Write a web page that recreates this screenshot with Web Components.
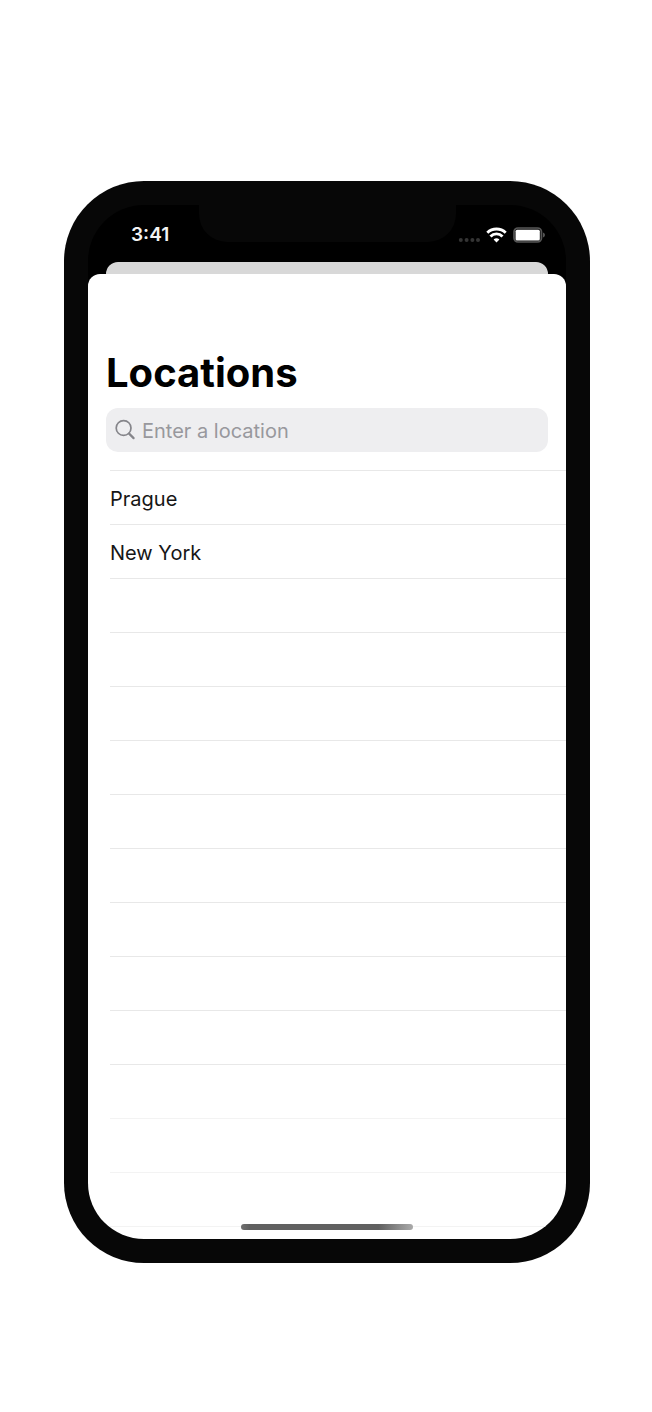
<!DOCTYPE html>
<html lang="en">
<head>
<meta charset="utf-8">
<meta name="viewport" content="width=device-width, initial-scale=1">
<title>Locations</title>
<style>
body { margin: 0; background: #fff; font-family: Inter, "Liberation Sans", sans-serif; color: #000; }
</style>
</head>
<body>
<phone-frame>
  <status-bar slot="status" time="3:41"></status-bar>
  <modal-sheet heading="Locations">
    <search-field placeholder="Enter a location"></search-field>
    <location-list rows="15">
      <location-row>Prague</location-row>
      <location-row>New York</location-row>
    </location-list>
  </modal-sheet>
</phone-frame>
<script>
const define = (name, html, setup) => customElements.define(name, class extends HTMLElement {
  connectedCallback() {
    if (this.shadowRoot) return;
    this.attachShadow({ mode: "open" }).innerHTML = html;
    if (setup) setup(this, this.shadowRoot);
  }
});

define("phone-frame", `
<style>
:host { display: block; padding: 181px 62px 149px 64px; }
.bezel { padding: 24px; border-radius: 80px; background: #070707; }
.screen { position: relative; overflow: hidden; border-radius: 56px; background: #000; }
.notch { position: absolute; top: 0; left: 111px; right: 110px; height: 37px; background: #070707; border-radius: 0 0 28px 28px; }
.home { position: absolute; bottom: 9px; left: 32%; right: 32%; height: 6px; border-radius: 3px;
  background: linear-gradient(90deg, #707070 0%, #606060 5%, #606060 80%, #aaa 100%); }
</style>
<div class="bezel"><div class="screen">
  <div class="notch"></div>
  <slot name="status"></slot>
  <slot></slot>
  <div class="home"></div>
</div></div>`);

define("status-bar", `
<style>
:host { display: block; position: relative; color: #f4f4f4; }
.bar { display: flex; align-items: center; justify-content: space-between; height: 57px; padding: 3px 21px 0 43px; box-sizing: border-box; }
time { font-size: 19px; line-height: 24px; font-weight: 600; }
.icons { display: flex; align-items: center; gap: 6px; }
svg { display: block; }
</style>
<div class="bar">
  <time></time>
  <div class="icons">
    <svg width="22" height="16" viewBox="0 0 22 16" fill="#343434"><circle cx="2.8" cy="13" r="2"/><circle cx="8.6" cy="13" r="2"/><circle cx="14.4" cy="13" r="2"/><circle cx="20" cy="13" r="2"/></svg>
    <svg width="21" height="16" viewBox="0 0 21 16" fill="none" stroke="#fff" stroke-width="2.9"><path d="M1.3 5.7A13.2 13.2 0 0 1 19.7 5.7"/><path d="M4.5 9.4A8.3 8.3 0 0 1 16.5 9.4"/><path d="M10.5 15.4 7.6 12.4Q10.5 10 13.4 12.4Z" fill="#fff" stroke="none"/></svg>
    <svg width="32" height="16" viewBox="0 0 32 16"><rect x="1" y="1" width="27.5" height="14" rx="4" fill="#111" stroke="#555" stroke-width="1.7"/><rect x="2.6" y="2.8" width="24.2" height="10.6" rx="1.5" fill="#fff"/><path d="M30 5.6Q32 6.2 32 8T30 10.4Z" fill="#555"/></svg>
  </div>
</div>`, (el, root) => { root.querySelector("time").textContent = el.getAttribute("time"); });

define("modal-sheet", `
<style>
:host { display: block; }
.behind { height: 12px; margin: 0 18px; border-radius: 12px 12px 0 0; background: #d8d8d8; }
.sheet { background: #fff; border-radius: 12px 12px 0 0; padding-top: 75px; }
h1 { margin: 0 18px 11px; font-size: 40px; line-height: 48px; font-weight: 700; }
</style>
<div class="behind"></div>
<div class="sheet"><h1></h1><slot></slot></div>`,
(el, root) => { root.querySelector("h1").textContent = el.getAttribute("heading"); });

define("search-field", `
<style>
:host { display: block; margin: 0 18px 18px; }
label { display: flex; align-items: center; gap: 5px; height: 44px; padding: 0 9px; border-radius: 12px; background: #eeeef0; }
svg { flex: none; }
input { flex: 1; min-width: 0; padding: 2px 0 0; border: 0; outline: 0; background: none; font: 20px/24px Inter, "Liberation Sans", sans-serif; color: #000; }
input::placeholder { color: #98989d; opacity: 1; }
</style>
<label>
  <svg width="22" height="22" viewBox="0 0 22 22" fill="none" stroke="#85858a" stroke-linecap="round" aria-hidden="true"><circle cx="8.6" cy="9" r="7.4" stroke-width="1.7"/><path d="M14.1 14.6 18.6 19.1" stroke-width="2.2"/></svg>
  <input type="text">
</label>`, (el, root) => {
  const input = root.querySelector("input");
  input.placeholder = el.getAttribute("placeholder");
  input.setAttribute("aria-label", el.getAttribute("placeholder"));
});

define("location-row", `
<style>
:host { display: block; box-sizing: border-box; height: 54px; border-top: 1px solid #e8e8e8; font-size: 20px; line-height: 24px; padding-top: 16px; color: #161616; }
:host([empty]) { padding: 0; }
:host([faint]) { border-top-color: #f3f3f3; }
:host([cut]) { height: 13px; }
</style>
<slot></slot>`);

define("location-list", `
<style>:host { display: block; margin-left: 22px; }</style>
<slot></slot>`, el => {
  const total = Number(el.getAttribute("rows"));
  for (let i = el.querySelectorAll("location-row").length; i < total; i++) {
    const row = document.createElement("location-row");
    row.toggleAttribute("empty", true);
    row.toggleAttribute("faint", i >= total - 3);
    row.toggleAttribute("cut", i === total - 1);
    el.append(row);
  }
});

</script>
</body>
</html>
